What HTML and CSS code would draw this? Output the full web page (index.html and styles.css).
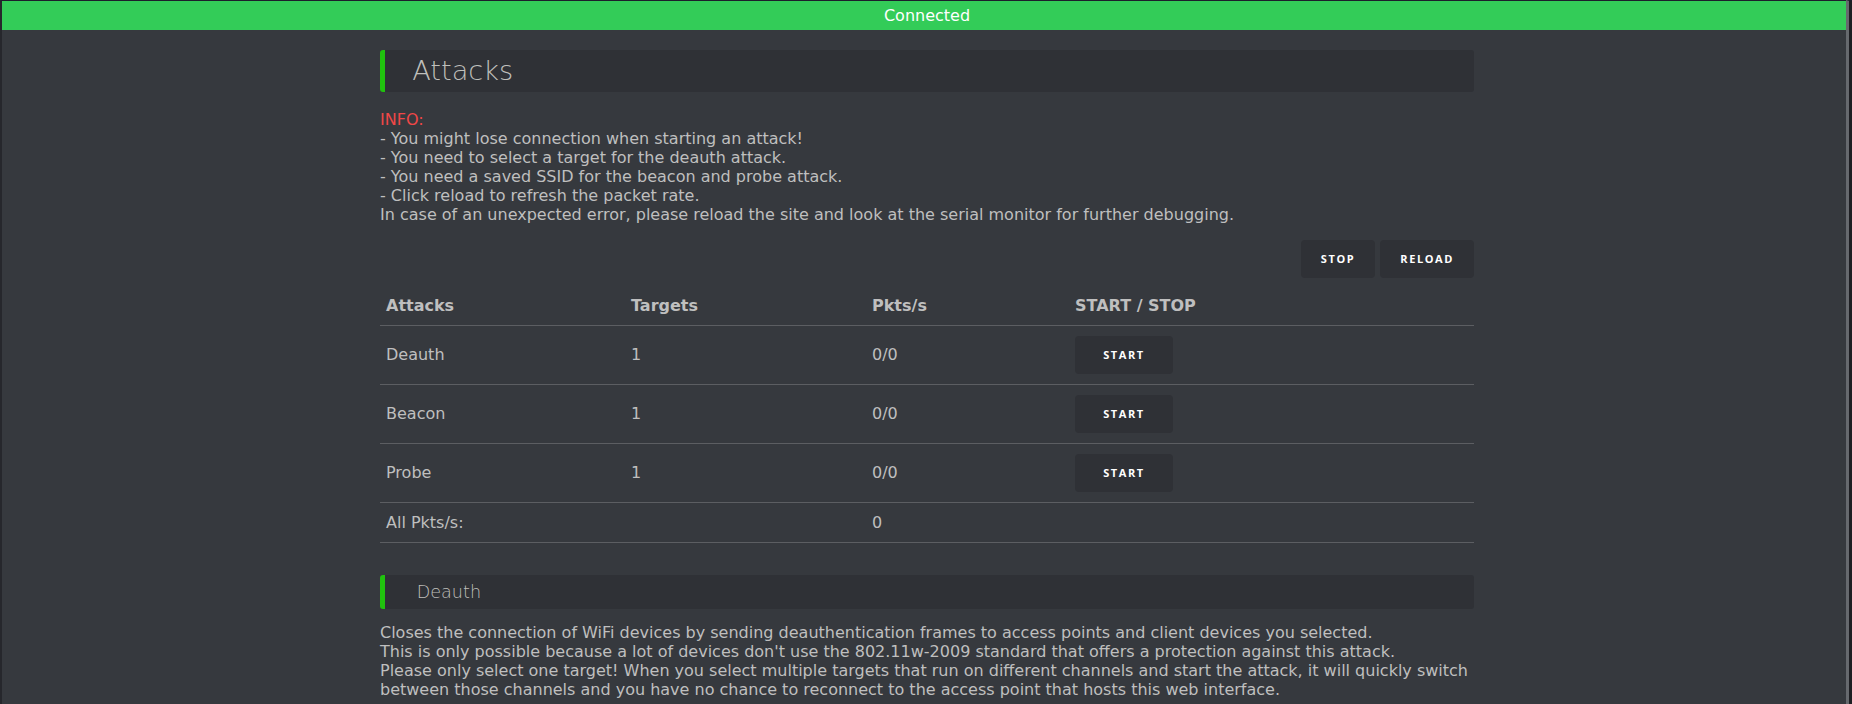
FILE: index.html
```html
<!DOCTYPE html>
<html lang="en">
<head>
<meta charset="utf-8">
<title>Attacks</title>
<link rel="stylesheet" href="styles.css">
</head>
<body>
<div class="frame">
  <div class="status">Connected</div>
  <div class="container">
    <h1 class="title">Attacks</h1>
    <p class="info"><span class="red">INFO:</span><br>
      - You might lose connection when starting an attack!<br>
      - You need to select a target for the deauth attack.<br>
      - You need a saved SSID for the beacon and probe attack.<br>
      - Click reload to refresh the packet rate.<br>
      In case of an unexpected error, please reload the site and look at the serial monitor for further debugging.
    </p>
    <div class="actions">
      <button class="btn">Stop</button>
      <button class="btn">Reload</button>
    </div>
    <table class="attacks">
      <thead>
        <tr>
          <th class="c1">Attacks</th>
          <th class="c2">Targets</th>
          <th class="c3">Pkts/s</th>
          <th class="c4">START / STOP</th>
        </tr>
      </thead>
      <tbody>
        <tr>
          <td>Deauth</td>
          <td>1</td>
          <td>0/0</td>
          <td><button class="btn btn-start">Start</button></td>
        </tr>
        <tr>
          <td>Beacon</td>
          <td>1</td>
          <td>0/0</td>
          <td><button class="btn btn-start">Start</button></td>
        </tr>
        <tr>
          <td>Probe</td>
          <td>1</td>
          <td>0/0</td>
          <td><button class="btn btn-start">Start</button></td>
        </tr>
        <tr>
          <td>All Pkts/s:</td>
          <td></td>
          <td>0</td>
          <td></td>
        </tr>
      </tbody>
    </table>
    <h2 class="subtitle">Deauth</h2>
    <p class="desc">Closes the connection of WiFi devices by sending deauthentication frames to access points and client devices you selected.<br>
      This is only possible because a lot of devices don't use the 802.11w-2009 standard that offers a protection against this attack.<br>
      Please only select one target! When you select multiple targets that run on different channels and start the attack, it will quickly switch between those channels and you have no chance to reconnect to the access point that hosts this web interface.
    </p>
  </div>
</div>
<div class="scrollbar"></div>
</body>
</html>
```
FILE: styles.css
```css
html, body {
  margin: 0;
  padding: 0;
  height: 100%;
  overflow: hidden;
  background: #36393e;
}

body {
  font-family: "DejaVu Sans", Verdana, sans-serif;
  font-size: 16px;
  color: #bfbfbf;
}

.frame {
  min-height: 100%;
  box-sizing: border-box;
  border-top: 1px solid #1d1e2c;
  border-left: 2px solid #26272c;
}

.status {
  background: #33cc58;
  color: #ffffff;
  text-align: center;
  padding: 5px;
  line-height: 19px;
}

.container {
  width: 1094px;
  margin: 0 auto;
}

.title {
  margin: 20px 0 18px;
  background: #2f3136;
  color: #bfbfbb;
  font-size: 27.2px;
  font-weight: 200;
  padding: 5.4px 27.2px;
  border-left: 5px solid #20c20e;
  border-radius: 3px;
}

.red {
  color: #f04747;
}

.info {
  margin: 0 0 16px;
  line-height: 19px;
}

.actions {
  display: flex;
  justify-content: flex-end;
  gap: 5px;
  margin-bottom: 8px;
}

.btn {
  display: inline-block;
  height: 38px;
  padding: 0 20px;
  color: #ffffff;
  background: #2f3136;
  border: none;
  border-radius: 4px;
  font-family: "Open Sans", "DejaVu Sans", sans-serif;
  font-size: 11px;
  font-weight: 700;
  letter-spacing: 1.6px;
  line-height: 38px;
  text-transform: uppercase;
  text-align: center;
  white-space: nowrap;
  box-sizing: border-box;
}

.btn-start {
  display: block;
  width: 98px;
  padding: 0;
}

.attacks {
  width: 100%;
  border-collapse: collapse;
  table-layout: fixed;
  margin-bottom: 32px;
}

.attacks th,
.attacks td {
  padding: 10px 6px;
  text-align: left;
  line-height: 19px;
  border-bottom: 1px solid #5c5e62;
}

.attacks th {
  font-weight: bold;
}

.c1 { width: 233px; }
.c2 { width: 229px; }
.c3 { width: 191px; }
.c4 { width: 393px; }

.subtitle {
  margin: 0 0 14px;
  background: #2f3136;
  color: #bfbfbb;
  font-size: 17.6px;
  font-weight: 200;
  padding: 7px 31.7px;
  border-left: 5px solid #20c20e;
  border-radius: 3px;
}

.desc {
  margin: 0;
  line-height: 19px;
}

.scrollbar {
  position: fixed;
  top: 0;
  right: 0;
  bottom: 0;
  width: 3px;
  background: #1e1f23;
  border-left: 3px solid #66696e;
  border-top: 1px solid #1d1e2c;
}
```
